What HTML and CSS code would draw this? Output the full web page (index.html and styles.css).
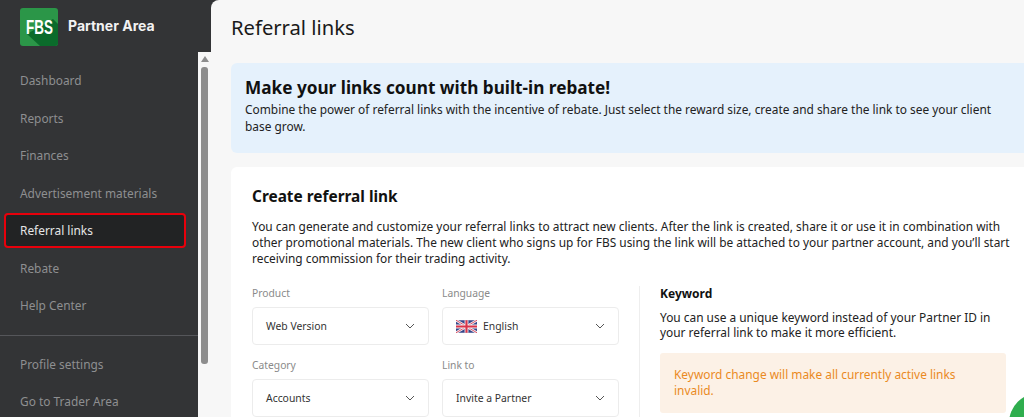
FILE: index.html
```html
<!DOCTYPE html>
<html lang="en">
<head>
<meta charset="utf-8">
<title>Referral links</title>
<link rel="stylesheet" href="styles.css">
</head>
<body>
<div class="app">
  <aside class="sidebar">
    <header class="brand">
      <svg class="logo" width="38" height="38" viewBox="0 0 38 38">
        <defs><clipPath id="lc"><rect width="38" height="38" rx="3"/></clipPath></defs>
        <g clip-path="url(#lc)">
          <rect width="38" height="38" fill="#2b9648"/>
          <path d="M7 26 L33 11 L38 16 V38 H20 Z" fill="#0b6b2b"/>
        </g>
        <text transform="translate(6 25.5) scale(.64 1)" class="logo-text">FBS</text>
      </svg>
      <span class="brand-name">Partner Area</span>
    </header>
    <div class="side-body">
      <nav class="nav">
        <div class="nav-group">
          <a class="nav-item">Dashboard</a>
          <a class="nav-item">Reports</a>
          <a class="nav-item">Finances</a>
          <a class="nav-item">Advertisement materials</a>
          <a class="nav-item active">Referral links</a>
          <a class="nav-item">Rebate</a>
          <a class="nav-item">Help Center</a>
        </div>
        <div class="nav-group second">
          <a class="nav-item">Profile settings</a>
          <a class="nav-item">Go to Trader Area</a>
        </div>
      </nav>
      <div class="scrollbar">
        <span class="arrow"></span>
        <span class="thumb"></span>
      </div>
    </div>
  </aside>
  <main class="main">
    <h1 class="title">Referral links</h1>
    <section class="banner">
      <h2>Make your links count with built-in rebate!</h2>
      <p>Combine the power of referral links with the incentive of rebate. Just select the reward size, create and share the link to see your client base grow.</p>
    </section>
    <section class="card">
      <h2>Create referral link</h2>
      <p class="intro">You can generate and customize your referral links to attract new clients. After the link is created, share it or use it in combination with other promotional materials. The new client who signs up for FBS using the link will be attached to your partner account, and you’ll start receiving commission for their trading activity.</p>
      <div class="columns">
        <div class="form">
          <div class="field">
            <label>Product</label>
            <div class="select"><span>Web Version</span><svg class="chev" width="10" height="6" viewBox="0 0 10 6"><path d="M1 1l4 4 4-4"/></svg></div>
          </div>
          <div class="field">
            <label>Language</label>
            <div class="select">
              <span class="lang">
                <svg class="flag" width="21" height="13" viewBox="0 0 60 36">
                  <rect width="60" height="36" rx="3" fill="#36468a"/>
                  <path d="M0 0L60 36M60 0L0 36" stroke="#f2eef0" stroke-width="7"/>
                  <path d="M0 0L60 36M60 0L0 36" stroke="#d9445a" stroke-width="2.5"/>
                  <path d="M30 0V36M0 18H60" stroke="#f2eef0" stroke-width="11"/>
                  <path d="M30 0V36M0 18H60" stroke="#d9344a" stroke-width="6"/>
                </svg>
                English
              </span>
              <svg class="chev" width="10" height="6" viewBox="0 0 10 6"><path d="M1 1l4 4 4-4"/></svg>
            </div>
          </div>
          <div class="field">
            <label>Category</label>
            <div class="select"><span>Accounts</span><svg class="chev" width="10" height="6" viewBox="0 0 10 6"><path d="M1 1l4 4 4-4"/></svg></div>
          </div>
          <div class="field">
            <label>Link to</label>
            <div class="select"><span>Invite a Partner</span><svg class="chev" width="10" height="6" viewBox="0 0 10 6"><path d="M1 1l4 4 4-4"/></svg></div>
          </div>
        </div>
        <aside class="keyword">
          <h3>Keyword</h3>
          <p>You can use a unique keyword instead of your Partner ID in your referral link to make it more efficient.</p>
          <div class="warning">Keyword change will make all currently active links invalid.</div>
        </aside>
      </div>
    </section>
  </main>
  <span class="chat"></span>
</div>
</body>
</html>
```
FILE: styles.css
```css
* { box-sizing: border-box; }
html, body { margin: 0; height: 100%; overflow: hidden; }
body { font-family: "Noto Sans", "Open Sans", sans-serif; color: #1a1a1a; background: #333436; }
.app { display: flex; width: 1024px; height: 417px; overflow: hidden; position: relative; }

.sidebar { width: 211px; flex: none; display: flex; flex-direction: column; background: #333436; }
.brand { height: 52px; flex: none; padding: 8px 0 0 20px; display: flex; align-items: flex-start; gap: 10px; }
.logo { flex: none; }
.logo-text { font-family: "Liberation Sans", sans-serif; font-size: 21px; font-weight: 700; fill: #fff; }
.brand-name { font-family: "Inter", sans-serif; font-weight: 700; font-size: 14px; color: #f2f2f2; line-height: 18px; margin-top: 9px; }
.side-body { flex: 1; display: flex; min-height: 0; }
.nav { width: 198px; flex: none; }
.nav-group { padding: 10px 0 10px; }
.nav-group.second { border-top: 1px solid #55565a; padding-top: 10px; }
.nav-item { display: block; height: 37.5px; line-height: 37px; padding-left: 20px; font-size: 11.9px; color: #8e8f91; }
.nav-item.active { margin: 1px 12px 1.5px 4px; padding-left: 14px; height: 35px; line-height: 30px; color: #e6e6e6; background: #222324; border: 2px solid #e8000b; border-radius: 4px; }
.scrollbar { width: 13px; flex: none; background: #f7f7f7; display: flex; flex-direction: column; align-items: center; padding-top: 4px; }
.arrow { width: 0; height: 0; border-left: 4px solid transparent; border-right: 4px solid transparent; border-bottom: 6px solid #8d8d8d; }
.thumb { width: 7px; height: 297px; margin-top: 5px; background: #8d8d8d; border-radius: 3px; }

.main { flex: 1; min-width: 0; background: #f7f7f7; border-top-left-radius: 8px; padding: 0 0 0 20px; }
.title { margin: 0; font-size: 20.2px; font-weight: 400; line-height: 27px; padding-top: 14px; color: #1a1a1a; }
.banner { margin-top: 22px; width: 820px; height: 90px; background: #e5f1fc; border-radius: 6px; padding: 13px 14px; }
.banner h2 { margin: 0; font-size: 17.2px; font-weight: 700; line-height: 23px; color: #111; }
.banner p { margin: 1.5px 0 0; font-size: 11.9px; line-height: 17px; color: #222; width: 770px; }
.card { margin-top: 14px; width: 820px; height: 300px; background: #fff; border-radius: 6px; padding: 19px 21px; }
.card h2 { margin: 0; font-size: 15.4px; font-weight: 700; line-height: 22px; color: #111; }
.intro { margin: 10px 0 0; width: 765px; font-size: 11.9px; line-height: 16px; color: #222; }
.columns { display: flex; margin-top: 20px; }
.form { width: 388px; flex: none; padding-right: 21px; border-right: 1px solid #eeeeee; display: grid; grid-template-columns: 177px 177px; column-gap: 13px; row-gap: 13px; align-content: start; }
.field label { display: block; font-size: 10.3px; line-height: 15px; color: #8a8a8a; margin-bottom: 6px; }
.select { height: 38px; border: 1px solid #ececec; border-radius: 4px; background: #fff; padding: 0 13px; display: flex; align-items: center; justify-content: space-between; font-size: 10.4px; color: #333; }
.lang { display: flex; align-items: center; gap: 6px; }
.flag { flex: none; }
.chev { flex: none; fill: none; stroke: #555; stroke-width: 1; }
.keyword { width: 366px; flex: none; padding-left: 20px; }
.keyword h3 { margin: 0; font-size: 12px; font-weight: 700; line-height: 15px; color: #111; }
.keyword p { margin: 9px 0 0; font-size: 11.9px; line-height: 15px; color: #222; }
.warning { margin-top: 13px; background: #fcf1e6; border-radius: 3px; height: 60px; padding: 13px 14px; font-size: 11.9px; line-height: 16px; color: #ea8a1f; }
.chat { position: absolute; left: 1009px; top: 393px; width: 60px; height: 60px; border-radius: 50%; background: #2fae4e; }
```
